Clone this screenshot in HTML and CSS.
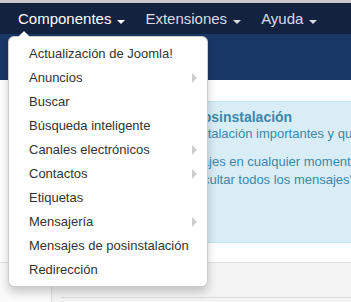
FILE: index.html
```html
<!DOCTYPE html>
<html lang="es">
<head>
<meta charset="utf-8">
<title>Panel de control</title>
<link rel="stylesheet" href="styles.css">
</head>
<body>
<div class="topstrip"></div>
<nav class="navbar">
  <ul class="nav">
    <li class="nav-item open">
      <a class="nav-link active" href="#">Componentes<span class="caret"></span></a>
      <ul class="dropdown">
        <li><a href="#">Actualización de Joomla!</a></li>
        <li class="sub"><a href="#">Anuncios</a></li>
        <li><a href="#">Buscar</a></li>
        <li><a href="#">Búsqueda inteligente</a></li>
        <li class="sub"><a href="#">Canales electrónicos</a></li>
        <li class="sub"><a href="#">Contactos</a></li>
        <li><a href="#">Etiquetas</a></li>
        <li class="sub"><a href="#">Mensajería</a></li>
        <li><a href="#">Mensajes de posinstalación</a></li>
        <li><a href="#">Redirección</a></li>
      </ul>
    </li>
    <li class="nav-item"><a class="nav-link" href="#">Extensiones<span class="caret"></span></a></li>
    <li class="nav-item"><a class="nav-link" href="#">Ayuda<span class="caret"></span></a></li>
  </ul>
</nav>
<header class="subhead"></header>
<main class="page">
  <div class="alert">
    <h4 class="alert-title">Tiene mensajes de posinstalación</h4>
    <p>Hay mensajes de posinstalación importantes y que requieren su atención.</p>
    <p>Puede revisar los mensajes en cualquier momento<br>pulsando en el botón 'Ocultar todos los mensajes'.</p>
    <p class="actions"><a class="btn" href="#">Revisar mensajes</a></p>
  </div>
</main>
<section class="lower">
  <div class="side"></div>
  <div class="content"><div class="card"></div></div>
</section>
</body>
</html>
```
FILE: styles.css
```css
html, body {
  margin: 0;
  padding: 0;
  overflow: hidden;
  width: 351px;
  height: 302px;
  background: #f3f3f3;
  font-family: "Liberation Sans", Arial, Helvetica, sans-serif;
}

.topstrip {
  height: 3px;
  background: #cacaca;
}

.navbar {
  height: 31px;
  background: #13223f;
  position: relative;
  z-index: 10;
}

.nav {
  list-style: none;
  margin: 0;
  padding: 0 0 0 8px;
  display: flex;
}

.nav-item {
  position: relative;
}

.nav-link {
  display: block;
  padding: 0 10px;
  line-height: 31px;
  font-size: 15px;
  color: #d8dce3;
  text-decoration: none;
  white-space: nowrap;
}

.nav-link.active {
  color: #ffffff;
}

.caret {
  display: inline-block;
  width: 0;
  height: 0;
  margin-left: 6px;
  vertical-align: baseline;
  border-top: 4px solid #d8dce3;
  border-left: 4px solid transparent;
  border-right: 4px solid transparent;
}

.nav-link.active .caret {
  border-top-color: #ffffff;
}

.dropdown {
  position: absolute;
  top: 100%;
  left: 0;
  margin: 2px 0 0;
  padding: 5px 0 4px;
  width: 198px;
  list-style: none;
  background: #ffffff;
  border: 1px solid rgba(0, 0, 0, 0.2);
  border-radius: 6px;
  box-shadow: 0 5px 10px rgba(0, 0, 0, 0.2);
}

.dropdown::before {
  content: "";
  position: absolute;
  top: -7px;
  left: 8px;
  border-left: 7px solid transparent;
  border-right: 7px solid transparent;
  border-bottom: 7px solid rgba(0, 0, 0, 0.2);
}

.dropdown::after {
  content: "";
  position: absolute;
  top: -6px;
  left: 9px;
  border-left: 6px solid transparent;
  border-right: 6px solid transparent;
  border-bottom: 6px solid #ffffff;
}

.dropdown a {
  display: block;
  padding: 3px 20px;
  font-size: 13px;
  line-height: 18px;
  color: #333333;
  text-decoration: none;
  white-space: nowrap;
}

.dropdown .sub > a::after {
  content: "";
  float: right;
  width: 0;
  height: 0;
  margin-top: 4px;
  margin-right: -10px;
  border-left: 5px solid #cccccc;
  border-top: 5px solid transparent;
  border-bottom: 5px solid transparent;
}

.subhead {
  height: 46px;
  background: #1a3867;
}

.page {
  background: #ffffff;
  padding: 21px 0 19px 51px;
}

.alert {
  margin-right: -20px;
  padding: 8px 14px 15px;
  background: #d9edf7;
  border: 1px solid #bce8f1;
  border-radius: 4px;
  color: #3a87ad;
  white-space: nowrap;
}

.alert-title {
  margin: 0;
  font-size: 14px;
  line-height: 15px;
  font-weight: bold;
}

.alert p {
  margin: 0 0 10px;
  font-size: 13px;
  line-height: 18px;
}

.alert p.actions {
  margin: 0;
}

.btn {
  display: inline-block;
  padding: 4px 12px;
  font-size: 13px;
  line-height: 18px;
  color: #ffffff;
  background: #2f6fb3;
  border: 1px solid #255a92;
  border-radius: 3px;
  text-decoration: none;
}

.lower {
  display: flex;
  border-top: 1px solid #e0e0e0;
  height: 60px;
}

.side {
  width: 51px;
  background: #fafafa;
  border-right: 1px solid #dddddd;
}

.content {
  flex: 1;
  padding: 34px 0 0 9px;
}

.card {
  border-top: 1px solid #dddddd;
  height: 20px;
}
```
